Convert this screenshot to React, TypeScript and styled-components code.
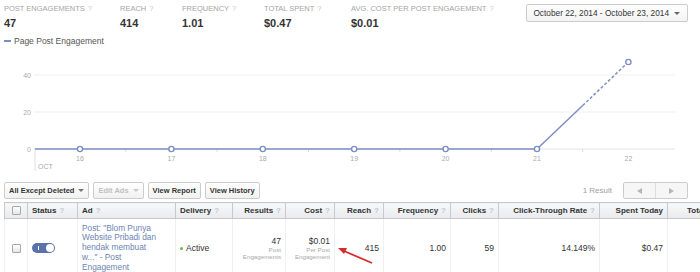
import styled, { createGlobalStyle } from "styled-components";

const GlobalStyle = createGlobalStyle`
  body {
    margin: 0;
    background: #fff;
    font-family: "Liberation Sans", Arial, sans-serif;
    color: #333;
  }
`;

const Page = styled.div`
  width: 700px;
  height: 272px;
  padding-left: 4px;
  box-sizing: border-box;
  overflow: hidden;
  display: flex;
  flex-direction: column;
`;

const StatsRow = styled.div`
  display: flex;
  padding-top: 4px;
  height: 30px;
  box-sizing: border-box;
`;

const Stat = styled.div<{ $w?: number }>`
  width: ${(p) => (p.$w ? `${p.$w}px` : "auto")};
  display: flex;
  flex-direction: column;
`;

const StatLabel = styled.div`
  font-size: 7.5px;
  line-height: 10px;
  color: #a5a5a5;
  text-transform: uppercase;
  white-space: nowrap;
`;

const Help = styled.span`
  color: #c8c8c8;
  margin-left: 3px;
`;

const StatValue = styled.div`
  margin-top: 3px;
  font-size: 11px;
  line-height: 13px;
  font-weight: bold;
  color: #333;
`;

const DatePicker = styled.div`
  margin-left: auto;
  margin-right: 12px;
  height: 18px;
  padding: 0 7px 0 6px;
  box-sizing: border-box;
  display: flex;
  align-items: center;
  gap: 5px;
  border: 1px solid #ccc;
  border-radius: 2px;
  background: linear-gradient(#fff, #f3f3f3);
  font-size: 8.3px;
  color: #333;
  white-space: nowrap;
`;

const Caret = styled.span<{ $color?: string }>`
  display: inline-block;
  width: 0;
  height: 0;
  border-left: 3px solid transparent;
  border-right: 3px solid transparent;
  border-top: 3px solid ${(p) => p.$color || "#777"};
`;

const Legend = styled.div`
  margin-top: 6px;
  height: 10px;
  display: flex;
  align-items: center;
  gap: 3px;
  font-size: 8.5px;
  color: #555;
`;

const LegendDash = styled.span`
  width: 7px;
  height: 2px;
  background: #7d8ec4;
`;

const ChartBox = styled.div`
  height: 128px;
  margin-left: -4px;
`;

const Toolbar = styled.div`
  margin-top: 8px;
  height: 17px;
  display: flex;
  align-items: center;
  gap: 4px;
  padding-right: 12px;
`;

const Button = styled.div<{ $disabled?: boolean }>`
  height: 17px;
  padding: 0 4px;
  box-sizing: border-box;
  display: flex;
  align-items: center;
  gap: 4px;
  border: 1px solid #ccc;
  border-radius: 2px;
  background: linear-gradient(#fff, #f1f1f1);
  font-size: 7.5px;
  font-weight: bold;
  color: ${(p) => (p.$disabled ? "#c0c0c0" : "#333")};
  white-space: nowrap;
`;

const ResultCount = styled.div`
  margin-left: auto;
  margin-right: 7px;
  font-size: 8px;
  color: #a0a0a0;
`;

const Pager = styled.div`
  display: flex;
  height: 17px;
  border: 1px solid #ccc;
  border-radius: 2px;
  box-sizing: border-box;
  background: #f6f6f6;
`;

const PagerBtn = styled.div<{ $first?: boolean }>`
  width: 31px;
  display: flex;
  align-items: center;
  justify-content: center;
  border-left: ${(p) => (p.$first ? "none" : "1px solid #ddd")};
`;

const Arrow = styled.span<{ $dir: "left" | "right" }>`
  width: 0;
  height: 0;
  border-top: 3px solid transparent;
  border-bottom: 3px solid transparent;
  ${(p) =>
    p.$dir === "left"
      ? "border-right: 5px solid #b5b5b5;"
      : "border-left: 5px solid #b5b5b5;"}
`;

const TableWrap = styled.div`
  position: relative;
  margin-top: 3px;
  width: 696px;
  overflow: hidden;
`;

const Table = styled.table`
  border-collapse: collapse;
  table-layout: fixed;
  width: 730px;
`;

const Th = styled.th<{ $align?: string }>`
  height: 16px;
  padding: 0 4px;
  box-sizing: border-box;
  border: 1px solid #c9c9c9;
  background: linear-gradient(#f7f8fa, #e8eaed);
  font-size: 8px;
  font-weight: bold;
  color: #333;
  text-align: ${(p) => p.$align || "left"};
  white-space: nowrap;
  overflow: hidden;
`;

const Td = styled.td<{ $align?: string }>`
  height: 58px;
  padding: 0 4px;
  border-left: 1px solid #f0f0f0;
  border-right: 1px solid #f0f0f0;
  vertical-align: middle;
  font-size: 8.5px;
  color: #333;
  text-align: ${(p) => p.$align || "left"};
`;

const Checkbox = styled.span`
  display: inline-block;
  width: 7px;
  height: 7px;
  border: 1px solid #a8a8a8;
  border-radius: 1px;
  background: linear-gradient(#fff, #e6e6e6);
  vertical-align: middle;
`;

const Toggle = styled.div`
  width: 23px;
  height: 10px;
  border-radius: 5px;
  background: #5a72ab;
  display: flex;
  align-items: center;
  justify-content: space-between;
  padding: 0 1px 0 6px;
  box-sizing: border-box;
`;

const ToggleMark = styled.span`
  width: 1px;
  height: 4px;
  background: #fff;
`;

const Knob = styled.span`
  width: 8px;
  height: 8px;
  border-radius: 50%;
  background: #fff;
`;

const AdLink = styled.div`
  max-width: 80px;
  font-size: 8.3px;
  line-height: 9.8px;
  color: #6d84b4;
`;

const Dot = styled.span`
  display: inline-block;
  width: 3px;
  height: 3px;
  border-radius: 50%;
  background: #6cb944;
  margin-right: 3px;
  vertical-align: middle;
`;

const Sub = styled.div`
  font-size: 6.2px;
  line-height: 7px;
  color: #a8a8a8;
`;

const Main = styled.div`
  line-height: 10px;
`;

const Annotation = styled.svg`
  position: absolute;
  left: 326px;
  top: 40px;
`;

const xs = [80, 171.4, 262.8, 354.2, 445.6, 537, 628.4];
const days = ["16", "17", "18", "19", "20", "21", "22"];
const Y0 = 103;
const YTOP = 16;
const LINE = "#7d8ec4";

const Chart = () => {
  const midX = (xs[5] + xs[6]) / 2;
  const midY = (Y0 + YTOP) / 2;
  return (
    <svg width="700" height="128" viewBox="0 0 700 128">
      <line x1="34" x2="675" y1="29" y2="29" stroke="#efefef" />
      <line x1="34" x2="675" y1="66" y2="66" stroke="#efefef" />
      <line x1="34" x2="675" y1={Y0} y2={Y0} stroke="#e2e2e2" />
      <line x1="35" x2="35" y1={Y0 + 1} y2="125" stroke="#e0e0e0" />
      {xs.slice(0, 6).map((x, i) => (
        <line
          key={"t" + i}
          x1={x + 45.7}
          x2={x + 45.7}
          y1={Y0}
          y2={Y0 + 3}
          stroke="#dcdcdc"
        />
      ))}
      <g fontFamily="Liberation Sans, Arial, sans-serif" fontSize="7" fill="#aaa">
        <text x="31" y="31.5" textAnchor="end">40</text>
        <text x="31" y="68.5" textAnchor="end">20</text>
        <text x="31" y="105.5" textAnchor="end">0</text>
        {xs.map((x, i) => (
          <text key={days[i]} x={x} y="114.5" textAnchor="middle">
            {days[i]}
          </text>
        ))}
        <text x="38" y="122.5">OCT</text>
      </g>
      <line x1="35" x2={xs[5]} y1={Y0} y2={Y0} stroke={LINE} strokeWidth="1.5" />
      <line x1={xs[5]} x2={midX} y1={Y0} y2={midY} stroke={LINE} strokeWidth="1.5" />
      <line
        x1={midX}
        x2={xs[6]}
        y1={midY}
        y2={YTOP}
        stroke={LINE}
        strokeWidth="1.5"
        strokeDasharray="3 2"
      />
      {xs.map((x, i) => (
        <circle
          key={"p" + i}
          cx={x}
          cy={i === 6 ? YTOP : Y0}
          r="2.6"
          fill="#fff"
          stroke={LINE}
          strokeWidth="1.4"
        />
      ))}
    </svg>
  );
};

const stats = [
  { label: "Post Engagements", value: "47", w: 116 },
  { label: "Reach", value: "414", w: 62 },
  { label: "Frequency", value: "1.01", w: 82 },
  { label: "Total Spent", value: "$0.47", w: 87 },
  { label: "Avg. Cost per Post Engagement", value: "$0.01" },
];

const cols = [23, 50, 98, 57, 53, 49, 49, 67, 48, 101, 68, 67];

export default function App() {
  return (
    <>
      <GlobalStyle />
      <Page>
        <StatsRow>
          {stats.map((s) => (
            <Stat key={s.label} $w={s.w}>
              <StatLabel>
                {s.label}
                <Help>?</Help>
              </StatLabel>
              <StatValue>{s.value}</StatValue>
            </Stat>
          ))}
          <DatePicker>
            October 22, 2014 - October 23, 2014
            <Caret $color="#666" />
          </DatePicker>
        </StatsRow>
        <Legend>
          <LegendDash />
          Page Post Engagement
        </Legend>
        <ChartBox>
          <Chart />
        </ChartBox>
        <Toolbar>
          <Button>
            All Except Deleted <Caret $color="#777" />
          </Button>
          <Button $disabled>
            Edit Ads <Caret $color="#c8c8c8" />
          </Button>
          <Button>View Report</Button>
          <Button>View History</Button>
          <ResultCount>1 Result</ResultCount>
          <Pager>
            <PagerBtn $first>
              <Arrow $dir="left" />
            </PagerBtn>
            <PagerBtn>
              <Arrow $dir="right" />
            </PagerBtn>
          </Pager>
        </Toolbar>
        <TableWrap>
          <Table>
            <colgroup>
              {cols.map((w, i) => (
                <col key={i} style={{ width: w }} />
              ))}
            </colgroup>
            <thead>
              <tr>
                <Th $align="center">
                  <Checkbox />
                </Th>
                <Th>
                  Status<Help>?</Help>
                </Th>
                <Th>
                  Ad<Help>?</Help>
                </Th>
                <Th>
                  Delivery<Help>?</Help>
                </Th>
                <Th $align="right">
                  Results<Help>?</Help>
                </Th>
                <Th $align="right">
                  Cost<Help>?</Help>
                </Th>
                <Th $align="right">
                  Reach<Help>?</Help>
                </Th>
                <Th $align="right">
                  Frequency<Help>?</Help>
                </Th>
                <Th $align="right">
                  Clicks<Help>?</Help>
                </Th>
                <Th $align="right">
                  Click-Through Rate<Help>?</Help>
                </Th>
                <Th $align="right">Spent Today</Th>
                <Th $align="right">Total Spent</Th>
              </tr>
            </thead>
            <tbody>
              <tr>
                <Td $align="center">
                  <Checkbox />
                </Td>
                <Td>
                  <Toggle>
                    <ToggleMark />
                    <Knob />
                  </Toggle>
                </Td>
                <Td>
                  <AdLink>
                    Post: "Blom Punya Website Pribadi dan hendak membuat w..." - Post Engagement
                  </AdLink>
                </Td>
                <Td>
                  <Dot />
                  Active
                </Td>
                <Td $align="right">
                  <Main>47</Main>
                  <Sub>Post</Sub>
                  <Sub>Engagements</Sub>
                </Td>
                <Td $align="right">
                  <Main>$0.01</Main>
                  <Sub>Per Post</Sub>
                  <Sub>Engagement</Sub>
                </Td>
                <Td $align="right">415</Td>
                <Td $align="right">1.00</Td>
                <Td $align="right">59</Td>
                <Td $align="right">14.149%</Td>
                <Td $align="right">$0.47</Td>
                <Td $align="right"></Td>
              </tr>
            </tbody>
          </Table>
          <Annotation width="46" height="26" viewBox="0 0 46 26">
            <line x1="42" y1="21" x2="14" y2="9" stroke="#d62b2b" strokeWidth="1.8" />
            <polygon points="8,6 17,6 14,12" fill="#d62b2b" />
          </Annotation>
        </TableWrap>
      </Page>
    </>
  );
}
